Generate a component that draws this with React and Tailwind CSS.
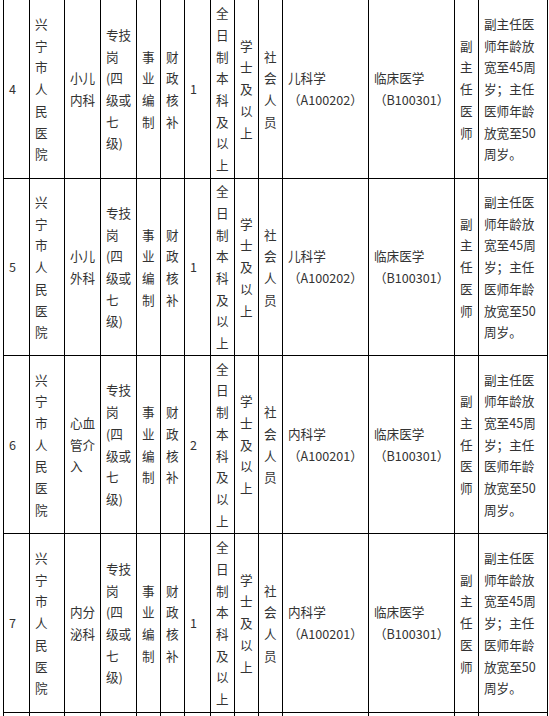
import React from "react";

const rows = [
  { no: "4", dept: ["小儿", "内科"], n: "1", major: "儿科学", code: "（A100202）" },
  { no: "5", dept: ["小儿", "外科"], n: "1", major: "儿科学", code: "（A100202）" },
  { no: "6", dept: ["心血", "管介", "入"], n: "2", major: "内科学", code: "（A100201）" },
  { no: "7", dept: ["内分", "泌科"], n: "1", major: "内科学", code: "（A100201）" },
];

const heights = ["h-[178px]", "h-[176px]", "h-[177px]", "h-[178px]"];

function Cell({ lines, h }) {
  return (
    <div className={`bg-white flex items-center pl-[5px] overflow-hidden ${h}`}>
      <div className="whitespace-nowrap">
        {lines.map((l, i) => (
          <div key={i}>{l}</div>
        ))}
      </div>
    </div>
  );
}

export default function App() {
  const split = (s) => s.split("");
  return (
    <div className="w-[549px] h-[716px] overflow-hidden bg-white">
      <div
        className="ml-[3px] w-[545px] bg-black grid gap-px px-px pb-px grid-cols-[25px_34px_35px_35px_23px_23px_25px_23px_23px_23px_85px_85px_23px_68px] text-[12.6px] leading-[21.7px] text-[#333]"
        style={{ fontFamily: '"Microsoft YaHei", "Noto Sans CJK SC", "Noto Sans", sans-serif' }}
      >
        {rows.map((r, i) => {
          const h = heights[i];
          return (
            <React.Fragment key={r.no}>
              <Cell h={h} lines={[r.no]} />
              <Cell h={h} lines={split("兴宁市人民医院")} />
              <Cell h={h} lines={r.dept} />
              <Cell h={h} lines={["专技", "岗", "(四", "级或", "七", "级)"]} />
              <Cell h={h} lines={split("事业编制")} />
              <Cell h={h} lines={split("财政核补")} />
              <Cell h={h} lines={[r.n]} />
              <Cell h={h} lines={split("全日制本科及以上")} />
              <Cell h={h} lines={split("学士及以上")} />
              <Cell h={h} lines={split("社会人员")} />
              <Cell h={h} lines={[r.major, r.code]} />
              <Cell h={h} lines={["临床医学", "（B100301）"]} />
              <Cell h={h} lines={split("副主任医师")} />
              <Cell
                h={h}
                lines={["副主任医", "师年龄放", "宽至45周", "岁；主任", "医师年龄", "放宽至50", "周岁。"]}
              />
            </React.Fragment>
          );
        })}
        {Array.from({ length: 14 }).map((_, k) => (
          <div key={"e" + k} className="bg-white h-[20px]" />
        ))}
      </div>
    </div>
  );
}
